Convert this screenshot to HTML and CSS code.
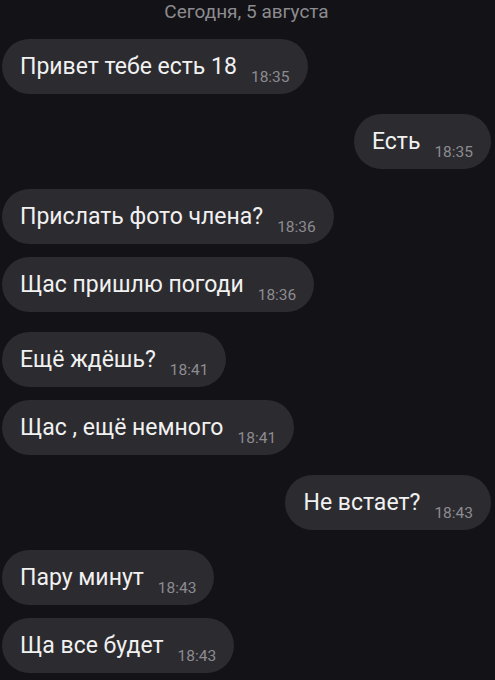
FILE: index.html
```html
<!DOCTYPE html>
<html lang="ru">
<head>
  <meta charset="UTF-8" />
  <meta name="viewport" content="width=device-width, initial-scale=1.0"/>
  <title>Чат</title>
  <link rel="stylesheet" href="styles.css">
</head>
<body>
  <div class="chat">
    <div class="date">Сегодня, 5 августа</div>

    <div class="msg in first"><span class="text">Привет тебе есть 18</span><span class="time">18:35</span></div>
    <div class="msg out"><span class="text">Есть</span><span class="time">18:35</span></div>

    <div class="msg in"><span class="text">Прислать фото члена?</span><span class="time">18:36</span></div>
    <div class="msg in next"><span class="text">Щас пришлю погоди</span><span class="time">18:36</span></div>

    <div class="msg in"><span class="text">Ещё ждёшь?</span><span class="time">18:41</span></div>
    <div class="msg in next"><span class="text">Щас , ещё немного</span><span class="time">18:41</span></div>

    <div class="msg out"><span class="text">Не встает?</span><span class="time">18:43</span></div>

    <div class="msg in"><span class="text">Пару минут</span><span class="time">18:43</span></div>
    <div class="msg in next"><span class="text">Ща все будет</span><span class="time">18:43</span></div>
  </div>
</body>
</html>
```

FILE: styles.css
```css
:root {
  --bg-color: #131216;
  --bubble-color: #2c2b30;
  --text-color: #f1f1f1;
  --muted-color: #8c8c90;
  --font-sans: Roboto, 'Noto Sans', Arial, sans-serif;
}

html, body {
  background-color: var(--bg-color);
}

body {
  margin: 0;
  padding: 0;
  font-family: var(--font-sans);
  color: var(--text-color);
}

.chat {
  display: flex;
  flex-direction: column;
  padding: 0 4px 0 2px;
}

.date {
  align-self: center;
  font-size: 19px;
  line-height: 24px;
  color: var(--muted-color);
}

.msg {
  display: inline-block;
  height: 55px;
  line-height: 56px;
  padding: 0 18px;
  border-radius: 28px;
  background-color: var(--bubble-color);
  white-space: nowrap;
  margin-top: 20px;
}

.msg.first {
  margin-top: 15px;
}

.msg.next {
  margin-top: 13px;
}

.msg.in {
  align-self: flex-start;
}

.msg.out {
  align-self: flex-end;
}

.text {
  font-size: 23px;
}

.time {
  margin-left: 14px;
  font-size: 15.5px;
  line-height: 1;
  vertical-align: -8px;
  color: var(--muted-color);
}
```
